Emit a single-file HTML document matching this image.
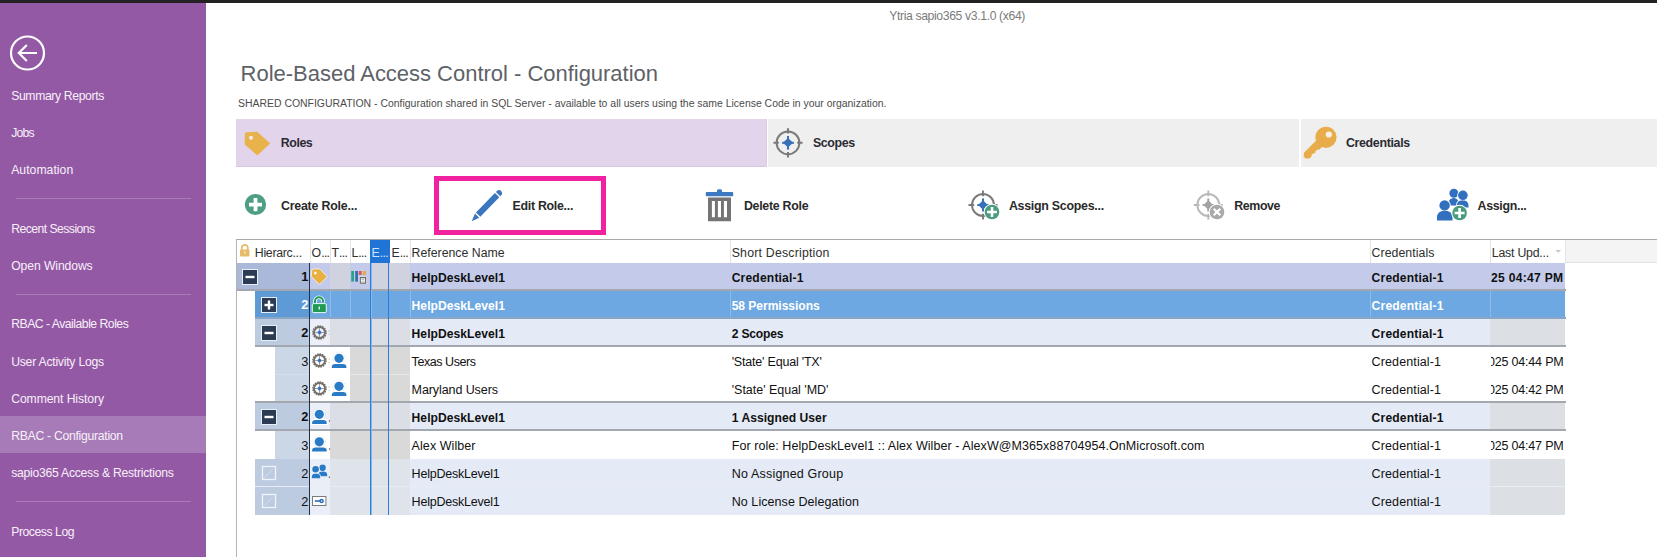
<!DOCTYPE html><html><head><meta charset="utf-8"><style>html,body{margin:0;padding:0;}body{width:1657px;height:557px;position:relative;overflow:hidden;background:#fff;font-family:"Liberation Sans",sans-serif;}div{box-sizing:border-box;}svg{position:absolute;overflow:visible;}</style></head><body>
<div style="position:absolute;left:0px;top:0px;width:1657px;height:3px;background:#242124;"></div>
<div style="position:absolute;left:0px;top:3px;width:206px;height:554px;background:#9459a5;"></div>
<div style="position:absolute;left:0px;top:416px;width:206px;height:37px;background:#a77bb7;"></div>
<div style="position:absolute;left:16px;top:198px;width:175px;height:1px;background:#a97cb9;"></div>
<div style="position:absolute;left:16px;top:294px;width:175px;height:1px;background:#a97cb9;"></div>
<div style="position:absolute;left:16px;top:501px;width:175px;height:1px;background:#a97cb9;"></div>
<svg style="left:0;top:0" width="60" height="80"><circle cx="27.5" cy="53" r="16.5" fill="none" stroke="#fff" stroke-width="2.2"/><path d="M19 53 H37 M26.8 45 L18.8 53 L26.8 61" fill="none" stroke="#fff" stroke-width="2.2" stroke-linecap="butt" stroke-linejoin="miter"/></svg>
<div style="position:absolute;top:89.97px;font-size:12.2px;line-height:12.2px;color:#f7f0f9;white-space:nowrap;letter-spacing:-0.367px;left:11.20px;">Summary Reports</div>
<div style="position:absolute;top:127.27px;font-size:12.2px;line-height:12.2px;color:#f7f0f9;white-space:nowrap;letter-spacing:-0.768px;left:11.20px;">Jobs</div>
<div style="position:absolute;top:164.27px;font-size:12.2px;line-height:12.2px;color:#f7f0f9;white-space:nowrap;letter-spacing:0.038px;left:11.20px;">Automation</div>
<div style="position:absolute;top:222.97px;font-size:12.2px;line-height:12.2px;color:#f7f0f9;white-space:nowrap;letter-spacing:-0.537px;left:11.20px;">Recent Sessions</div>
<div style="position:absolute;top:260.17px;font-size:12.2px;line-height:12.2px;color:#f7f0f9;white-space:nowrap;letter-spacing:-0.102px;left:11.20px;">Open Windows</div>
<div style="position:absolute;top:318.27px;font-size:12.2px;line-height:12.2px;color:#f7f0f9;white-space:nowrap;letter-spacing:-0.488px;left:11.20px;">RBAC - Available Roles</div>
<div style="position:absolute;top:355.67px;font-size:12.2px;line-height:12.2px;color:#f7f0f9;white-space:nowrap;letter-spacing:-0.231px;left:11.20px;">User Activity Logs</div>
<div style="position:absolute;top:393.27px;font-size:12.2px;line-height:12.2px;color:#f7f0f9;white-space:nowrap;letter-spacing:-0.095px;left:11.20px;">Comment History</div>
<div style="position:absolute;top:429.97px;font-size:12.2px;line-height:12.2px;color:#f7f0f9;white-space:nowrap;letter-spacing:-0.275px;left:11.20px;">RBAC - Configuration</div>
<div style="position:absolute;top:466.97px;font-size:12.2px;line-height:12.2px;color:#f7f0f9;white-space:nowrap;letter-spacing:-0.257px;left:11.20px;">sapio365 Access &amp; Restrictions</div>
<div style="position:absolute;top:525.77px;font-size:12.2px;line-height:12.2px;color:#f7f0f9;white-space:nowrap;letter-spacing:-0.438px;left:11.20px;">Process Log</div>
<div style="position:absolute;top:9.57px;font-size:12.2px;line-height:12.2px;color:#7b7b7b;white-space:nowrap;letter-spacing:-0.363px;left:889.20px;">Ytria sapio365 v3.1.0 (x64)</div>
<div style="position:absolute;top:63.27px;font-size:22px;line-height:22px;color:#5d6267;white-space:nowrap;letter-spacing:-0.020px;left:240.60px;">Role-Based Access Control - Configuration</div>
<div style="position:absolute;top:99.16px;font-size:10.44px;line-height:10.44px;color:#4b4b4b;white-space:nowrap;letter-spacing:-0.001px;left:238.00px;">SHARED CONFIGURATION - Configuration shared in SQL Server - available to all users using the same License Code in your organization.</div>
<div style="position:absolute;left:236px;top:119px;width:531px;height:48px;background:#e2d4ea;"></div>
<div style="position:absolute;left:236px;top:166px;width:531px;height:1px;background:#d8c6e1;"></div>
<div style="position:absolute;left:766px;top:119px;width:1px;height:48px;background:#dccbe4;"></div>
<div style="position:absolute;left:768px;top:119px;width:531px;height:48px;background:#efefef;"></div>
<div style="position:absolute;left:1301px;top:119px;width:356px;height:48px;background:#efefef;"></div>
<div style="position:absolute;top:136.50px;font-size:12.4px;line-height:12.4px;color:#2b2b33;white-space:nowrap;font-weight:bold;letter-spacing:-0.454px;left:280.80px;">Roles</div>
<div style="position:absolute;top:136.50px;font-size:12.4px;line-height:12.4px;color:#2b2b33;white-space:nowrap;font-weight:bold;letter-spacing:-0.352px;left:812.90px;">Scopes</div>
<div style="position:absolute;top:136.50px;font-size:12.4px;line-height:12.4px;color:#2b2b33;white-space:nowrap;font-weight:bold;letter-spacing:-0.321px;left:1345.90px;">Credentials</div>
<div style="position:absolute;top:200.00px;font-size:12.4px;line-height:12.4px;color:#2a2a2a;white-space:nowrap;font-weight:bold;letter-spacing:-0.211px;left:280.90px;">Create Role...</div>
<div style="position:absolute;top:200.00px;font-size:12.4px;line-height:12.4px;color:#2a2a2a;white-space:nowrap;font-weight:bold;letter-spacing:-0.289px;left:512.50px;">Edit Role...</div>
<div style="position:absolute;top:200.00px;font-size:12.4px;line-height:12.4px;color:#2a2a2a;white-space:nowrap;font-weight:bold;letter-spacing:-0.285px;left:743.90px;">Delete Role</div>
<div style="position:absolute;top:200.00px;font-size:12.4px;line-height:12.4px;color:#2a2a2a;white-space:nowrap;font-weight:bold;letter-spacing:-0.264px;left:1008.90px;">Assign Scopes...</div>
<div style="position:absolute;top:200.00px;font-size:12.4px;line-height:12.4px;color:#2a2a2a;white-space:nowrap;font-weight:bold;letter-spacing:-0.407px;left:1234.30px;">Remove</div>
<div style="position:absolute;top:200.00px;font-size:12.4px;line-height:12.4px;color:#2a2a2a;white-space:nowrap;font-weight:bold;letter-spacing:-0.297px;left:1477.50px;">Assign...</div>
<div style="position:absolute;left:434px;top:176px;width:172px;height:59px;border:5px solid #f0229f;"></div>
<div style="position:absolute;left:236px;top:239px;width:1421px;height:1px;background:#a9a9a9;"></div>
<div style="position:absolute;left:236px;top:239px;width:1px;height:318px;background:#b4b4b4;"></div>
<div style="position:absolute;left:237px;top:240px;width:1328px;height:23px;background:#ffffff;"></div>
<div style="position:absolute;left:1565px;top:240px;width:92px;height:23px;background:#f4f4f4;"></div>
<div style="position:absolute;left:1565px;top:262px;width:92px;height:1px;background:#e3e3e3;"></div>
<div style="position:absolute;left:370px;top:240px;width:20px;height:23px;background:#1f74d6;"></div>
<div style="position:absolute;left:310px;top:240px;width:1px;height:23px;background:#e4e4e4;"></div>
<div style="position:absolute;left:330px;top:240px;width:1px;height:23px;background:#e4e4e4;"></div>
<div style="position:absolute;left:350px;top:240px;width:1px;height:23px;background:#e4e4e4;"></div>
<div style="position:absolute;left:410px;top:240px;width:1px;height:23px;background:#e4e4e4;"></div>
<div style="position:absolute;left:730px;top:240px;width:1px;height:23px;background:#e4e4e4;"></div>
<div style="position:absolute;left:1370px;top:240px;width:1px;height:23px;background:#e4e4e4;"></div>
<div style="position:absolute;left:1490px;top:240px;width:1px;height:23px;background:#e4e4e4;"></div>
<div style="position:absolute;left:1565px;top:240px;width:1px;height:23px;background:#e4e4e4;"></div>
<div style="position:absolute;top:246.69px;font-size:12.3px;line-height:12.3px;color:#2e2e2e;white-space:nowrap;letter-spacing:-0.289px;left:254.80px;">Hierarc...</div>
<div style="position:absolute;top:246.69px;font-size:12.3px;line-height:12.3px;color:#2e2e2e;white-space:nowrap;left:311.60px;">O<span style='letter-spacing:-0.7px'>...</span></div>
<div style="position:absolute;top:246.69px;font-size:12.3px;line-height:12.3px;color:#2e2e2e;white-space:nowrap;left:331.50px;">T<span style='letter-spacing:-0.7px'>...</span></div>
<div style="position:absolute;top:246.69px;font-size:12.3px;line-height:12.3px;color:#2e2e2e;white-space:nowrap;left:351.50px;">L<span style='letter-spacing:-0.7px'>...</span></div>
<div style="position:absolute;top:246.69px;font-size:12.3px;line-height:12.3px;color:#cfe3fa;white-space:nowrap;left:371.50px;">E<span style='letter-spacing:-0.7px'>...</span></div>
<div style="position:absolute;top:246.69px;font-size:12.3px;line-height:12.3px;color:#2e2e2e;white-space:nowrap;left:391.50px;">E<span style='letter-spacing:-0.7px'>...</span></div>
<div style="position:absolute;top:246.69px;font-size:12.3px;line-height:12.3px;color:#2e2e2e;white-space:nowrap;letter-spacing:0.001px;left:411.60px;">Reference Name</div>
<div style="position:absolute;top:246.69px;font-size:12.3px;line-height:12.3px;color:#2e2e2e;white-space:nowrap;letter-spacing:0.215px;left:731.70px;">Short Description</div>
<div style="position:absolute;top:246.69px;font-size:12.3px;line-height:12.3px;color:#2e2e2e;white-space:nowrap;letter-spacing:0.053px;left:1371.60px;">Credentials</div>
<div style="position:absolute;top:246.69px;font-size:12.3px;line-height:12.3px;color:#2e2e2e;white-space:nowrap;letter-spacing:-0.207px;left:1491.80px;">Last Upd...</div>
<div style="position:absolute;left:237px;top:263px;width:72px;height:26px;background:#aab9d9;"></div>
<div style="position:absolute;left:310px;top:263px;width:20px;height:26px;background:#c4cbea;"></div>
<div style="position:absolute;left:330px;top:263px;width:20px;height:26px;background:#d0d2df;"></div>
<div style="position:absolute;left:350px;top:263px;width:20px;height:26px;background:#c4cbea;"></div>
<div style="position:absolute;left:370px;top:263px;width:19px;height:26px;background:#d0d2df;"></div>
<div style="position:absolute;left:389px;top:263px;width:21px;height:26px;background:#d0d2df;"></div>
<div style="position:absolute;left:410px;top:263px;width:320px;height:26px;background:#c4cbea;"></div>
<div style="position:absolute;left:730px;top:263px;width:640px;height:26px;background:#c4cbea;"></div>
<div style="position:absolute;left:1370px;top:263px;width:120px;height:26px;background:#c4cbea;"></div>
<div style="position:absolute;left:1490px;top:263px;width:75px;height:26px;background:#c4cbea;"></div>
<div style="position:absolute;left:237px;top:289px;width:1329px;height:2px;background:#a2a7b0;"></div>
<div style="position:absolute;left:255px;top:291px;width:54px;height:26px;background:#5e9ad6;"></div>
<div style="position:absolute;left:310px;top:291px;width:20px;height:26px;background:#6ea8e2;"></div>
<div style="position:absolute;left:330px;top:291px;width:20px;height:26px;background:#6ea8e2;"></div>
<div style="position:absolute;left:350px;top:291px;width:20px;height:26px;background:#6ea8e2;"></div>
<div style="position:absolute;left:370px;top:291px;width:19px;height:26px;background:#6ea8e2;"></div>
<div style="position:absolute;left:389px;top:291px;width:21px;height:26px;background:#6ea8e2;"></div>
<div style="position:absolute;left:410px;top:291px;width:320px;height:26px;background:#6ea8e2;"></div>
<div style="position:absolute;left:730px;top:291px;width:640px;height:26px;background:#6ea8e2;"></div>
<div style="position:absolute;left:1370px;top:291px;width:120px;height:26px;background:#6ea8e2;"></div>
<div style="position:absolute;left:1490px;top:291px;width:75px;height:26px;background:#6ea8e2;"></div>
<div style="position:absolute;left:330px;top:291px;width:1px;height:26px;background:#8dbcea;"></div>
<div style="position:absolute;left:350px;top:291px;width:1px;height:26px;background:#8dbcea;"></div>
<div style="position:absolute;left:410px;top:291px;width:1px;height:26px;background:#8dbcea;"></div>
<div style="position:absolute;left:730px;top:291px;width:1px;height:26px;background:#8dbcea;"></div>
<div style="position:absolute;left:1370px;top:291px;width:1px;height:26px;background:#8dbcea;"></div>
<div style="position:absolute;left:1490px;top:291px;width:1px;height:26px;background:#8dbcea;"></div>
<div style="position:absolute;left:255px;top:317px;width:1311px;height:2px;background:#8aa6c6;"></div>
<div style="position:absolute;left:255px;top:319px;width:54px;height:26px;background:#bccbe0;"></div>
<div style="position:absolute;left:310px;top:319px;width:20px;height:26px;background:#eceff8;"></div>
<div style="position:absolute;left:330px;top:319px;width:20px;height:26px;background:#dcdee6;"></div>
<div style="position:absolute;left:350px;top:319px;width:20px;height:26px;background:#dcdee6;"></div>
<div style="position:absolute;left:370px;top:319px;width:19px;height:26px;background:#dcdee6;"></div>
<div style="position:absolute;left:389px;top:319px;width:21px;height:26px;background:#dcdee6;"></div>
<div style="position:absolute;left:410px;top:319px;width:320px;height:26px;background:#e4eaf6;"></div>
<div style="position:absolute;left:730px;top:319px;width:640px;height:26px;background:#e4eaf6;"></div>
<div style="position:absolute;left:1370px;top:319px;width:120px;height:26px;background:#e4eaf6;"></div>
<div style="position:absolute;left:1490px;top:319px;width:75px;height:26px;background:#dcdfe4;"></div>
<div style="position:absolute;left:255px;top:345px;width:1311px;height:2px;background:#a2a7b0;"></div>
<div style="position:absolute;left:275px;top:347px;width:34px;height:28px;background:#cbd7e7;"></div>
<div style="position:absolute;left:310px;top:347px;width:20px;height:28px;background:#ffffff;"></div>
<div style="position:absolute;left:330px;top:347px;width:20px;height:28px;background:#ffffff;"></div>
<div style="position:absolute;left:350px;top:347px;width:20px;height:28px;background:#d9d9d9;"></div>
<div style="position:absolute;left:370px;top:347px;width:19px;height:28px;background:#d9d9d9;"></div>
<div style="position:absolute;left:389px;top:347px;width:21px;height:28px;background:#d9d9d9;"></div>
<div style="position:absolute;left:410px;top:347px;width:320px;height:28px;background:#fff;"></div>
<div style="position:absolute;left:730px;top:347px;width:640px;height:28px;background:#fff;"></div>
<div style="position:absolute;left:1370px;top:347px;width:120px;height:28px;background:#fff;"></div>
<div style="position:absolute;left:1490px;top:347px;width:75px;height:28px;background:#fff;"></div>
<div style="position:absolute;left:275px;top:375px;width:34px;height:26px;background:#cbd7e7;"></div>
<div style="position:absolute;left:310px;top:375px;width:20px;height:26px;background:#ffffff;"></div>
<div style="position:absolute;left:330px;top:375px;width:20px;height:26px;background:#ffffff;"></div>
<div style="position:absolute;left:350px;top:375px;width:20px;height:26px;background:#d9d9d9;"></div>
<div style="position:absolute;left:370px;top:375px;width:19px;height:26px;background:#d9d9d9;"></div>
<div style="position:absolute;left:389px;top:375px;width:21px;height:26px;background:#d9d9d9;"></div>
<div style="position:absolute;left:410px;top:375px;width:320px;height:26px;background:#fff;"></div>
<div style="position:absolute;left:730px;top:375px;width:640px;height:26px;background:#fff;"></div>
<div style="position:absolute;left:1370px;top:375px;width:120px;height:26px;background:#fff;"></div>
<div style="position:absolute;left:1490px;top:375px;width:75px;height:26px;background:#fff;"></div>
<div style="position:absolute;left:275px;top:374px;width:34px;height:1px;background:#d6dfeb;"></div>
<div style="position:absolute;left:350px;top:374px;width:60px;height:1px;background:#e6e6e6;"></div>
<div style="position:absolute;left:255px;top:401px;width:1311px;height:2px;background:#a2a7b0;"></div>
<div style="position:absolute;left:255px;top:403px;width:54px;height:26px;background:#bccbe0;"></div>
<div style="position:absolute;left:310px;top:403px;width:20px;height:26px;background:#eceff8;"></div>
<div style="position:absolute;left:330px;top:403px;width:20px;height:26px;background:#dcdee6;"></div>
<div style="position:absolute;left:350px;top:403px;width:20px;height:26px;background:#dcdee6;"></div>
<div style="position:absolute;left:370px;top:403px;width:19px;height:26px;background:#dcdee6;"></div>
<div style="position:absolute;left:389px;top:403px;width:21px;height:26px;background:#dcdee6;"></div>
<div style="position:absolute;left:410px;top:403px;width:320px;height:26px;background:#e4eaf6;"></div>
<div style="position:absolute;left:730px;top:403px;width:640px;height:26px;background:#e4eaf6;"></div>
<div style="position:absolute;left:1370px;top:403px;width:120px;height:26px;background:#e4eaf6;"></div>
<div style="position:absolute;left:1490px;top:403px;width:75px;height:26px;background:#dcdfe4;"></div>
<div style="position:absolute;left:255px;top:429px;width:1311px;height:2px;background:#a2a7b0;"></div>
<div style="position:absolute;left:275px;top:431px;width:34px;height:28px;background:#cbd7e7;"></div>
<div style="position:absolute;left:310px;top:431px;width:20px;height:28px;background:#ffffff;"></div>
<div style="position:absolute;left:330px;top:431px;width:20px;height:28px;background:#d9d9d9;"></div>
<div style="position:absolute;left:350px;top:431px;width:20px;height:28px;background:#d9d9d9;"></div>
<div style="position:absolute;left:370px;top:431px;width:19px;height:28px;background:#d9d9d9;"></div>
<div style="position:absolute;left:389px;top:431px;width:21px;height:28px;background:#d9d9d9;"></div>
<div style="position:absolute;left:410px;top:431px;width:320px;height:28px;background:#fff;"></div>
<div style="position:absolute;left:730px;top:431px;width:640px;height:28px;background:#fff;"></div>
<div style="position:absolute;left:1370px;top:431px;width:120px;height:28px;background:#fff;"></div>
<div style="position:absolute;left:1490px;top:431px;width:75px;height:28px;background:#fff;"></div>
<div style="position:absolute;left:255px;top:459px;width:54px;height:28px;background:#bccbe0;"></div>
<div style="position:absolute;left:310px;top:459px;width:20px;height:28px;background:#e9eef7;"></div>
<div style="position:absolute;left:330px;top:459px;width:20px;height:28px;background:#dfe3ea;"></div>
<div style="position:absolute;left:350px;top:459px;width:20px;height:28px;background:#dfe3ea;"></div>
<div style="position:absolute;left:370px;top:459px;width:19px;height:28px;background:#dfe3ea;"></div>
<div style="position:absolute;left:389px;top:459px;width:21px;height:28px;background:#dfe3ea;"></div>
<div style="position:absolute;left:410px;top:459px;width:320px;height:28px;background:#e4eaf6;"></div>
<div style="position:absolute;left:730px;top:459px;width:640px;height:28px;background:#e4eaf6;"></div>
<div style="position:absolute;left:1370px;top:459px;width:120px;height:28px;background:#e4eaf6;"></div>
<div style="position:absolute;left:1490px;top:459px;width:75px;height:28px;background:#dcdfe4;"></div>
<div style="position:absolute;left:255px;top:487px;width:54px;height:28px;background:#bccbe0;"></div>
<div style="position:absolute;left:310px;top:487px;width:20px;height:28px;background:#e9eef7;"></div>
<div style="position:absolute;left:330px;top:487px;width:20px;height:28px;background:#dfe3ea;"></div>
<div style="position:absolute;left:350px;top:487px;width:20px;height:28px;background:#dfe3ea;"></div>
<div style="position:absolute;left:370px;top:487px;width:19px;height:28px;background:#dfe3ea;"></div>
<div style="position:absolute;left:389px;top:487px;width:21px;height:28px;background:#dfe3ea;"></div>
<div style="position:absolute;left:410px;top:487px;width:320px;height:28px;background:#e4eaf6;"></div>
<div style="position:absolute;left:730px;top:487px;width:640px;height:28px;background:#e4eaf6;"></div>
<div style="position:absolute;left:1370px;top:487px;width:120px;height:28px;background:#e4eaf6;"></div>
<div style="position:absolute;left:1490px;top:487px;width:75px;height:28px;background:#dcdfe4;"></div>
<div style="position:absolute;left:255px;top:486px;width:1310px;height:1px;background:#e7ecf6;"></div>
<div style="position:absolute;left:309px;top:263px;width:1px;height:252px;background:#22304a;"></div>
<div style="position:absolute;left:370px;top:263px;width:1px;height:252px;background:#2a7dd8;"></div>
<div style="position:absolute;left:371px;top:263px;width:1px;height:252px;background:#8ab8e8;"></div>
<div style="position:absolute;left:388px;top:263px;width:1px;height:252px;background:#2a7dd8;"></div>
<svg style="left:242px;top:269px" width="16" height="16"><rect x="0.5" y="0.5" width="15" height="15" fill="#2c3b54" stroke="#e8eef8" stroke-width="1"/><rect x="3.5" y="6.8" width="9" height="2.4" fill="#fff"/></svg>
<svg style="left:261px;top:297px" width="16" height="16"><rect x="0.5" y="0.5" width="15" height="15" fill="#2c3b54" stroke="#e8eef8" stroke-width="1"/><rect x="3.5" y="6.8" width="9" height="2.4" fill="#fff"/><rect x="6.8" y="3.5" width="2.4" height="9" fill="#fff"/></svg>
<svg style="left:261px;top:325px" width="16" height="16"><rect x="0.5" y="0.5" width="15" height="15" fill="#2c3b54" stroke="#e8eef8" stroke-width="1"/><rect x="3.5" y="6.8" width="9" height="2.4" fill="#fff"/></svg>
<svg style="left:261px;top:409px" width="16" height="16"><rect x="0.5" y="0.5" width="15" height="15" fill="#2c3b54" stroke="#e8eef8" stroke-width="1"/><rect x="3.5" y="6.8" width="9" height="2.4" fill="#fff"/></svg>
<svg style="left:261px;top:465px" width="16" height="16"><rect x="1.5" y="1.5" width="13" height="13" fill="none" stroke="#f0f4fa" stroke-width="1.3"/><path d="M4 12 L12 4" stroke="#e8eef6" stroke-width="1" stroke-dasharray="1.5 1.5"/></svg>
<svg style="left:261px;top:493px" width="16" height="16"><rect x="1.5" y="1.5" width="13" height="13" fill="none" stroke="#f0f4fa" stroke-width="1.3"/><path d="M4 12 L12 4" stroke="#e8eef6" stroke-width="1" stroke-dasharray="1.5 1.5"/></svg>
<div style="position:absolute;top:270.96px;font-size:12.8px;line-height:12.8px;color:#111111;white-space:nowrap;font-weight:bold;left:301.28px;">1</div>
<div style="position:absolute;top:298.96px;font-size:12.8px;line-height:12.8px;color:#ffffff;white-space:nowrap;font-weight:bold;left:301.28px;">2</div>
<div style="position:absolute;top:326.96px;font-size:12.8px;line-height:12.8px;color:#111111;white-space:nowrap;font-weight:bold;left:301.28px;">2</div>
<div style="position:absolute;top:355.76px;font-size:12.8px;line-height:12.8px;color:#111111;white-space:nowrap;left:301.28px;">3</div>
<div style="position:absolute;top:383.76px;font-size:12.8px;line-height:12.8px;color:#111111;white-space:nowrap;left:301.28px;">3</div>
<div style="position:absolute;top:410.96px;font-size:12.8px;line-height:12.8px;color:#111111;white-space:nowrap;font-weight:bold;left:301.28px;">2</div>
<div style="position:absolute;top:439.76px;font-size:12.8px;line-height:12.8px;color:#111111;white-space:nowrap;left:301.28px;">3</div>
<div style="position:absolute;top:467.76px;font-size:12.8px;line-height:12.8px;color:#111111;white-space:nowrap;left:301.28px;">2</div>
<div style="position:absolute;top:495.76px;font-size:12.8px;line-height:12.8px;color:#111111;white-space:nowrap;left:301.28px;">2</div>
<div style="position:absolute;top:271.55px;font-size:12.1px;line-height:12.1px;color:#111111;white-space:nowrap;font-weight:bold;letter-spacing:0.041px;left:411.60px;">HelpDeskLevel1</div>
<div style="position:absolute;top:271.55px;font-size:12.1px;line-height:12.1px;color:#111111;white-space:nowrap;font-weight:bold;letter-spacing:0.172px;left:731.70px;">Credential-1</div>
<div style="position:absolute;top:271.55px;font-size:12.1px;line-height:12.1px;color:#111111;white-space:nowrap;font-weight:bold;letter-spacing:0.172px;left:1371.60px;">Credential-1</div>
<div style="position:absolute;top:299.55px;font-size:12.1px;line-height:12.1px;color:#ffffff;white-space:nowrap;font-weight:bold;letter-spacing:0.041px;left:411.60px;">HelpDeskLevel1</div>
<div style="position:absolute;top:299.55px;font-size:12.1px;line-height:12.1px;color:#ffffff;white-space:nowrap;font-weight:bold;letter-spacing:-0.056px;left:731.70px;">58 Permissions</div>
<div style="position:absolute;top:299.55px;font-size:12.1px;line-height:12.1px;color:#ffffff;white-space:nowrap;font-weight:bold;letter-spacing:0.172px;left:1371.60px;">Credential-1</div>
<div style="position:absolute;top:327.55px;font-size:12.1px;line-height:12.1px;color:#111111;white-space:nowrap;font-weight:bold;letter-spacing:0.041px;left:411.60px;">HelpDeskLevel1</div>
<div style="position:absolute;top:327.55px;font-size:12.1px;line-height:12.1px;color:#111111;white-space:nowrap;font-weight:bold;letter-spacing:-0.192px;left:731.70px;">2 Scopes</div>
<div style="position:absolute;top:327.55px;font-size:12.1px;line-height:12.1px;color:#111111;white-space:nowrap;font-weight:bold;letter-spacing:0.172px;left:1371.60px;">Credential-1</div>
<div style="position:absolute;top:356.02px;font-size:12.5px;line-height:12.5px;color:#111111;white-space:nowrap;letter-spacing:-0.434px;left:411.60px;">Texas Users</div>
<div style="position:absolute;top:356.02px;font-size:12.5px;line-height:12.5px;color:#111111;white-space:nowrap;letter-spacing:-0.201px;left:731.70px;">'State' Equal 'TX'</div>
<div style="position:absolute;top:356.02px;font-size:12.5px;line-height:12.5px;color:#111111;white-space:nowrap;letter-spacing:0.117px;left:1371.60px;">Credential-1</div>
<div style="position:absolute;top:384.02px;font-size:12.5px;line-height:12.5px;color:#111111;white-space:nowrap;letter-spacing:-0.088px;left:411.60px;">Maryland Users</div>
<div style="position:absolute;top:384.02px;font-size:12.5px;line-height:12.5px;color:#111111;white-space:nowrap;letter-spacing:-0.016px;left:731.70px;">'State' Equal 'MD'</div>
<div style="position:absolute;top:384.02px;font-size:12.5px;line-height:12.5px;color:#111111;white-space:nowrap;letter-spacing:0.117px;left:1371.60px;">Credential-1</div>
<div style="position:absolute;top:411.55px;font-size:12.1px;line-height:12.1px;color:#111111;white-space:nowrap;font-weight:bold;letter-spacing:0.041px;left:411.60px;">HelpDeskLevel1</div>
<div style="position:absolute;top:411.55px;font-size:12.1px;line-height:12.1px;color:#111111;white-space:nowrap;font-weight:bold;letter-spacing:0.042px;left:731.70px;">1 Assigned User</div>
<div style="position:absolute;top:411.55px;font-size:12.1px;line-height:12.1px;color:#111111;white-space:nowrap;font-weight:bold;letter-spacing:0.172px;left:1371.60px;">Credential-1</div>
<div style="position:absolute;top:440.02px;font-size:12.5px;line-height:12.5px;color:#111111;white-space:nowrap;letter-spacing:0.072px;left:411.60px;">Alex Wilber</div>
<div style="position:absolute;top:440.02px;font-size:12.5px;line-height:12.5px;color:#111111;white-space:nowrap;letter-spacing:0.066px;left:731.70px;">For role: HelpDeskLevel1 :: Alex Wilber - AlexW@M365x88704954.OnMicrosoft.com</div>
<div style="position:absolute;top:440.02px;font-size:12.5px;line-height:12.5px;color:#111111;white-space:nowrap;letter-spacing:0.117px;left:1371.60px;">Credential-1</div>
<div style="position:absolute;top:468.02px;font-size:12.5px;line-height:12.5px;color:#111111;white-space:nowrap;letter-spacing:-0.216px;left:411.60px;">HelpDeskLevel1</div>
<div style="position:absolute;top:468.02px;font-size:12.5px;line-height:12.5px;color:#111111;white-space:nowrap;letter-spacing:0.188px;left:731.70px;">No Assigned Group</div>
<div style="position:absolute;top:468.02px;font-size:12.5px;line-height:12.5px;color:#111111;white-space:nowrap;letter-spacing:0.117px;left:1371.60px;">Credential-1</div>
<div style="position:absolute;top:496.02px;font-size:12.5px;line-height:12.5px;color:#111111;white-space:nowrap;letter-spacing:-0.216px;left:411.60px;">HelpDeskLevel1</div>
<div style="position:absolute;top:496.02px;font-size:12.5px;line-height:12.5px;color:#111111;white-space:nowrap;letter-spacing:0.072px;left:731.70px;">No License Delegation</div>
<div style="position:absolute;top:496.02px;font-size:12.5px;line-height:12.5px;color:#111111;white-space:nowrap;letter-spacing:0.117px;left:1371.60px;">Credential-1</div>
<div style="position:absolute;left:1490.5px;top:263px;width:74px;height:28px;overflow:hidden;"><div style="position:absolute;left:0.50px;top:8.55px;font-size:12.1px;line-height:12.1px;letter-spacing:0.293px;color:#111111;white-space:nowrap;font-weight:bold;">25 04:47 PM</div></div>
<div style="position:absolute;left:1490.5px;top:347px;width:74px;height:28px;overflow:hidden;"><div style="position:absolute;left:-2.50px;top:9.02px;font-size:12.5px;line-height:12.5px;letter-spacing:-0.194px;color:#111111;white-space:nowrap;">025 04:44 PM</div></div>
<div style="position:absolute;left:1490.5px;top:375px;width:74px;height:28px;overflow:hidden;"><div style="position:absolute;left:-2.50px;top:9.02px;font-size:12.5px;line-height:12.5px;letter-spacing:-0.194px;color:#111111;white-space:nowrap;">025 04:42 PM</div></div>
<div style="position:absolute;left:1490.5px;top:431px;width:74px;height:28px;overflow:hidden;"><div style="position:absolute;left:-2.50px;top:9.02px;font-size:12.5px;line-height:12.5px;letter-spacing:-0.194px;color:#111111;white-space:nowrap;">025 04:47 PM</div></div>
<svg style="left:0px;top:0px" width="1657" height="557" viewBox="0 0 1657 557"><path d="M244.8 134.2 Q244.8 132.4 246.6 132.3 L257.2 131.7 L270.2 143.4 L257.3 155.4 L244.7 144.6 Z" fill="#e8b34b"/><circle cx="251" cy="137.8" r="2.1" fill="#f3e6ef"/><circle cx="788" cy="142.8" r="11.4" fill="none" stroke="#7a7a7a" stroke-width="2.0"/><path d="M788 128.20000000000002 V133.60000000000002 M788 157.4 V152.0 M773.4 142.8 H778.8 M802.6 142.8 H797.2" stroke="#7a7a7a" stroke-width="2.0" fill="none"/><path d="M788 138.0 L793.0 142.8 L788 147.60000000000002 L783.0 142.8 Z" fill="#3570b8"/><rect x="787.0" y="136.0" width="2" height="13.6" fill="#3570b8"/><rect x="782.1" y="141.8" width="11.8" height="2" fill="#3570b8"/><circle cx="1326" cy="137.3" r="10.6" fill="#e8ad4a"/><circle cx="1328.8" cy="134.5" r="3.1" fill="#f7f1ea"/><path d="M1317.2 139.6 L1304.0 152.8 L1303.6 156.5 L1305.6 158.6 L1309.5 158.4 L1311.8 156.0 L1311.6 154.6 L1313.4 153.4 L1315.2 153.0 L1315.3 151.4 L1317.2 149.8 L1319.4 149.6 L1325.5 143.5 Z" fill="#e8ad4a"/><circle cx="255.5" cy="204.5" r="10.6" fill="#4e9f81"/><path d="M249 204.6 H262 M255.5 198 V211.3" stroke="#fff" stroke-width="3.8"/><g transform="translate(471.7 221.2) rotate(-45.7)" fill="#3a75bd"><path d="M0 0 L7.8 -3.0 L7.8 3.0 Z"/><rect x="9.2" y="-3.05" width="27.2" height="6.1"/><path d="M37.8 -3.05 L39.6 -3.05 A3.1 3.1 0 0 1 39.6 3.05 L37.8 3.05 Z"/></g><rect x="705.8" y="192.1" width="27.4" height="4.1" rx="0.8" fill="#3d7ac3"/><rect x="717" y="189.2" width="5" height="3.5" rx="1.5" fill="#3d7ac3"/><path d="M708 197.5 H731 V221.3 H708 Z M711.9 201 V217.3 H714.9 V201 Z M717.9 201 V217.3 H721 V201 Z M723.9 201 V217.3 H727 V201 Z" fill="#747474" fill-rule="evenodd"/><circle cx="983" cy="205" r="11.0" fill="none" stroke="#7a7a7a" stroke-width="1.9"/><path d="M983 190.5 V196.2 M983 219.5 V213.8 M968.5 205 H974.2 M997.5 205 H991.8" stroke="#7a7a7a" stroke-width="1.9" fill="none"/><path d="M983 200.3684210526316 L987.8245614035088 205 L983 209.6315789473684 L978.1754385964912 205 Z" fill="#3570b8"/><rect x="982.0" y="198.43859649122808" width="2" height="13.12280701754386" fill="#3570b8"/><rect x="977.3070175438596" y="204.0" width="11.385964912280702" height="2" fill="#3570b8"/><circle cx="992" cy="212" r="8.3" fill="#ffffff"/><circle cx="992" cy="212" r="7.3" fill="#4a9d7c"/><path d="M987.036 212 H996.964 M992 207.036 V216.964" stroke="#fff" stroke-width="2.6279999999999997"/><circle cx="1208.3" cy="205" r="11.0" fill="none" stroke="#b9b9b9" stroke-width="1.9"/><path d="M1208.3 190.5 V196.2 M1208.3 219.5 V213.8 M1193.8 205 H1199.5 M1222.8 205 H1217.1" stroke="#b9b9b9" stroke-width="1.9" fill="none"/><path d="M1208.3 200.3684210526316 L1213.1245614035088 205 L1208.3 209.6315789473684 L1203.4754385964911 205 Z" fill="#a3a3a3"/><rect x="1207.3" y="198.43859649122808" width="2" height="13.12280701754386" fill="#a3a3a3"/><rect x="1202.6070175438597" y="204.0" width="11.385964912280702" height="2" fill="#a3a3a3"/><circle cx="1217" cy="212" r="8.3" fill="#ffffff"/><circle cx="1217" cy="212" r="7.3" fill="#a9a9a9"/><path d="M1213.715 208.715 L1220.285 215.285 M1220.285 208.715 L1213.715 215.285" stroke="#fff" stroke-width="2.19"/><path d="M1448.5 205.5 L1448.5 203.4 Q1448.5 198 1455.25 198 L1452.05 198 Q1458.8 198 1458.8 203.4 L1458.8 205.5 Z" fill="#ffffff" stroke="#ffffff" stroke-width="1.4"/><circle cx="1453.9" cy="193.2" r="5.2" fill="#ffffff"/><path d="M1448.5 205.5 L1448.5 203.4 Q1448.5 198 1455.25 198 L1452.05 198 Q1458.8 198 1458.8 203.4 L1458.8 205.5 Z" fill="#3170bf"/><circle cx="1453.9" cy="193.2" r="4.5" fill="#3170bf"/><path d="M1456.8 207.5 L1456.8 205.484 Q1456.8 200.3 1463.28 200.3 L1462.02 200.3 Q1468.5 200.3 1468.5 205.484 L1468.5 207.5 Z" fill="#ffffff" stroke="#ffffff" stroke-width="1.6"/><circle cx="1462.9" cy="195.3" r="5.6" fill="#ffffff"/><path d="M1456.8 207.5 L1456.8 205.484 Q1456.8 200.3 1463.28 200.3 L1462.02 200.3 Q1468.5 200.3 1468.5 205.484 L1468.5 207.5 Z" fill="#3170bf"/><circle cx="1462.9" cy="195.3" r="4.8" fill="#3170bf"/><path d="M1437 220.5 L1437 217.728 Q1437 210.6 1445.91 210.6 L1443.59 210.6 Q1452.5 210.6 1452.5 217.728 L1452.5 220.5 Z" fill="#ffffff" stroke="#ffffff" stroke-width="1.8"/><circle cx="1444.6" cy="205.4" r="6.1000000000000005" fill="#ffffff"/><path d="M1437 220.5 L1437 217.728 Q1437 210.6 1445.91 210.6 L1443.59 210.6 Q1452.5 210.6 1452.5 217.728 L1452.5 220.5 Z" fill="#3170bf"/><circle cx="1444.6" cy="205.4" r="5.2" fill="#3170bf"/><circle cx="1459.6" cy="213" r="8.3" fill="#ffffff"/><circle cx="1459.6" cy="213" r="7.3" fill="#4a9d7c"/><path d="M1454.636 213 H1464.5639999999999 M1459.6 208.036 V217.964" stroke="#fff" stroke-width="2.6279999999999997"/><path d="M241.8 250 V247.8 A3 3 0 0 1 247.8 247.8 V250" fill="none" stroke="#e6bb6c" stroke-width="1.8"/><rect x="240" y="249.6" width="9.5" height="6.8" rx="0.8" fill="#e6bb6c"/><rect x="243.9" y="251.5" width="1.6" height="2.2" fill="#f6e6c6"/><path d="M1555.5 250 L1561 250 L1558.25 252.8 Z" fill="#c4c4c4"/><path d="M311.6 270.8 Q311.6 269.2 313.2 269.1 L319.8 268.9 L327.2 276.7 L319.4 284.4 L311.4 276.6 Z" fill="#e8b040" stroke="#fbf4e6" stroke-width="0.8"/><circle cx="315.3" cy="273" r="1.5" fill="#fff3d6"/><rect x="351.2" y="271" width="2.8" height="10.6" fill="#29a383"/><rect x="355.2" y="271" width="2.8" height="10.6" fill="#3470b0"/><rect x="358.8" y="271" width="2.9" height="4" fill="#e0555a"/><rect x="362.8" y="271" width="3.2" height="4" fill="#e8a94a"/><rect x="359.5" y="276.8" width="6.8" height="7.2" fill="#ffffff"/><rect x="360.3" y="277.6" width="5.2" height="5.6" fill="none" stroke="#6a6a6a" stroke-width="1.2"/><path d="M361.8 279.4 H364 M361.8 281.2 H364" stroke="#8a8a8a" stroke-width="0.7"/><path d="M314.9 304 V301.3 A4.1 4.1 0 0 1 323.1 301.3 V302.3" fill="none" stroke="#ffffff" stroke-width="3.6"/><path d="M314.9 304 V301.3 A4.1 4.1 0 0 1 323.1 301.3 V302.3" fill="none" stroke="#1f9a55" stroke-width="2"/><rect x="312.3" y="303.6" width="14" height="9" rx="1.3" fill="#1f9a55" stroke="#ffffff" stroke-width="0.9"/><rect x="318.6" y="306.5" width="1.4" height="3" fill="#e9f5ee"/><circle cx="319.5" cy="332.5" r="6" fill="none" stroke="#75706c" stroke-width="2.6" stroke-dasharray="1.5 0.8"/><circle cx="319.5" cy="332.5" r="5.5" fill="none" stroke="#75706c" stroke-width="1.8"/><path d="M319.5 328.0 V330.2 M319.5 337.0 V334.8 M315.0 332.5 H317.2 M324.0 332.5 H321.8" stroke="#9a9690" stroke-width="0.9"/><path d="M319.5 330.1 L321.9 332.5 L319.5 334.9 L317.1 332.5 Z" fill="#3a6fb4"/><circle cx="329.1" cy="330.9" r="0.55" fill="#b0a8a0"/><circle cx="329.1" cy="334.3" r="0.55" fill="#b0a8a0"/><circle cx="319.5" cy="360.5" r="6" fill="none" stroke="#75706c" stroke-width="2.6" stroke-dasharray="1.5 0.8"/><circle cx="319.5" cy="360.5" r="5.5" fill="none" stroke="#75706c" stroke-width="1.8"/><path d="M319.5 356.0 V358.2 M319.5 365.0 V362.8 M315.0 360.5 H317.2 M324.0 360.5 H321.8" stroke="#9a9690" stroke-width="0.9"/><path d="M319.5 358.1 L321.9 360.5 L319.5 362.9 L317.1 360.5 Z" fill="#3a6fb4"/><circle cx="329.1" cy="358.9" r="0.55" fill="#b0a8a0"/><circle cx="329.1" cy="362.3" r="0.55" fill="#b0a8a0"/><circle cx="319.5" cy="388.5" r="6" fill="none" stroke="#75706c" stroke-width="2.6" stroke-dasharray="1.5 0.8"/><circle cx="319.5" cy="388.5" r="5.5" fill="none" stroke="#75706c" stroke-width="1.8"/><path d="M319.5 384.0 V386.2 M319.5 393.0 V390.8 M315.0 388.5 H317.2 M324.0 388.5 H321.8" stroke="#9a9690" stroke-width="0.9"/><path d="M319.5 386.1 L321.9 388.5 L319.5 390.9 L317.1 388.5 Z" fill="#3a6fb4"/><circle cx="329.1" cy="386.9" r="0.55" fill="#b0a8a0"/><circle cx="329.1" cy="390.3" r="0.55" fill="#b0a8a0"/><circle cx="339" cy="358.3" r="6.3" fill="none" stroke="#b9c6d4" stroke-width="0.5" stroke-dasharray="1 1.2"/><path d="M331.8 368.0 L331.8 366.908 Q331.8 364.1 335.31 364.1 L342.89 364.1 Q346.4 364.1 346.4 366.908 L346.4 368.0 Z" fill="#ffffff" stroke="#ffffff" stroke-width="2.2"/><circle cx="339" cy="358.3" r="5.699999999999999" fill="#ffffff"/><path d="M331.8 368.0 L331.8 366.908 Q331.8 364.1 335.31 364.1 L342.89 364.1 Q346.4 364.1 346.4 366.908 L346.4 368.0 Z" fill="#2a7bc6"/><circle cx="339" cy="358.3" r="4.6" fill="#2a7bc6"/><circle cx="339" cy="386.3" r="6.3" fill="none" stroke="#b9c6d4" stroke-width="0.5" stroke-dasharray="1 1.2"/><path d="M331.8 396.0 L331.8 394.908 Q331.8 392.1 335.31 392.1 L342.89 392.1 Q346.4 392.1 346.4 394.908 L346.4 396.0 Z" fill="#ffffff" stroke="#ffffff" stroke-width="2.2"/><circle cx="339" cy="386.3" r="5.699999999999999" fill="#ffffff"/><path d="M331.8 396.0 L331.8 394.908 Q331.8 392.1 335.31 392.1 L342.89 392.1 Q346.4 392.1 346.4 394.908 L346.4 396.0 Z" fill="#2a7bc6"/><circle cx="339" cy="386.3" r="4.6" fill="#2a7bc6"/><circle cx="319.3" cy="414.3" r="6.3" fill="none" stroke="#b9c6d4" stroke-width="0.5" stroke-dasharray="1 1.2"/><path d="M312.1 424.0 L312.1 422.908 Q312.1 420.1 315.61 420.1 L323.19 420.1 Q326.7 420.1 326.7 422.908 L326.7 424.0 Z" fill="#ffffff" stroke="#ffffff" stroke-width="2.2"/><circle cx="319.3" cy="414.3" r="5.699999999999999" fill="#ffffff"/><path d="M312.1 424.0 L312.1 422.908 Q312.1 420.1 315.61 420.1 L323.19 420.1 Q326.7 420.1 326.7 422.908 L326.7 424.0 Z" fill="#2a7bc6"/><circle cx="319.3" cy="414.3" r="4.6" fill="#2a7bc6"/><circle cx="329.5" cy="421" r="0.7" fill="#555"/><circle cx="319.3" cy="441.8" r="6.3" fill="none" stroke="#b9c6d4" stroke-width="0.5" stroke-dasharray="1 1.2"/><path d="M312.1 451.5 L312.1 450.408 Q312.1 447.6 315.61 447.6 L323.19 447.6 Q326.7 447.6 326.7 450.408 L326.7 451.5 Z" fill="#ffffff" stroke="#ffffff" stroke-width="2.2"/><circle cx="319.3" cy="441.8" r="5.699999999999999" fill="#ffffff"/><path d="M312.1 451.5 L312.1 450.408 Q312.1 447.6 315.61 447.6 L323.19 447.6 Q326.7 447.6 326.7 450.408 L326.7 451.5 Z" fill="#2a7bc6"/><circle cx="319.3" cy="441.8" r="4.6" fill="#2a7bc6"/><circle cx="329.5" cy="449" r="0.7" fill="#555"/><path d="M318.4 476.2 L318.4 474.912 Q318.4 471.6 322.53999999999996 471.6 L323.06 471.6 Q327.2 471.6 327.2 474.912 L327.2 476.2 Z" fill="#f2f6fb" stroke="#f2f6fb" stroke-width="1.2"/><circle cx="322.6" cy="467.7" r="3.8000000000000003" fill="#f2f6fb"/><path d="M318.4 476.2 L318.4 474.912 Q318.4 471.6 322.53999999999996 471.6 L323.06 471.6 Q327.2 471.6 327.2 474.912 L327.2 476.2 Z" fill="#2a7bc6"/><circle cx="322.6" cy="467.7" r="3.2" fill="#2a7bc6"/><path d="M311.8 478.2 L311.8 476.856 Q311.8 473.4 316.12 473.4 L315.88 473.4 Q320.2 473.4 320.2 476.856 L320.2 478.2 Z" fill="#f2f6fb" stroke="#f2f6fb" stroke-width="1.2"/><circle cx="315.6" cy="469.2" r="3.9" fill="#f2f6fb"/><path d="M311.8 478.2 L311.8 476.856 Q311.8 473.4 316.12 473.4 L315.88 473.4 Q320.2 473.4 320.2 476.856 L320.2 478.2 Z" fill="#2a7bc6"/><circle cx="315.6" cy="469.2" r="3.3" fill="#2a7bc6"/><circle cx="329.3" cy="477.3" r="0.7" fill="#555"/><rect x="312.5" y="496.5" width="13.4" height="9" fill="#ffffff" stroke="#7b7b7b" stroke-width="1"/><path d="M314.8 501 H320" stroke="#2d6cb8" stroke-width="1.6"/><circle cx="321.6" cy="501" r="2.3" fill="#2d6cb8"/><circle cx="321.6" cy="501" r="0.8" fill="#ffffff"/></svg>
</body></html>
